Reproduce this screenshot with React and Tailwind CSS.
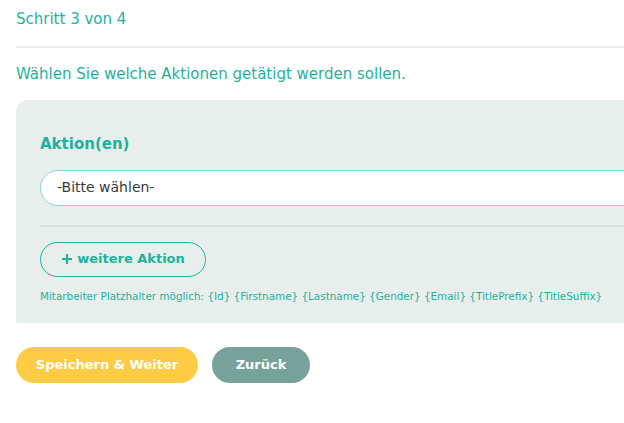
export default function App() {
  return (
    <div className="w-full min-h-[423px] overflow-hidden bg-white" style={{ fontFamily: '"DejaVu Sans", sans-serif' }}>
      <div className="w-[700px] pl-4">
        <div className="h-[38px] flex items-center text-[15px] text-[#1bb39e]">Schritt 3 von 4</div>
        <div className="h-[2px] bg-[#ececec] mt-[8px]" />
        <div className="mt-[15px] text-[15px] text-[#1bb39e]">Wählen Sie welche Aktionen getätigt werden sollen.</div>

        <div className="mt-[14px] bg-[#e7eeec] rounded-tl-[12px] px-6 pt-[34px] h-[223px]">
          <div className="text-[15px] font-bold text-[#1bb39e] leading-5">Aktion(en)</div>
          <div className="mt-[16px] h-[36px] bg-white border border-[#7fded1] rounded-l-full flex items-center pl-4 text-[14px] text-[#3a3a3a]">
            -Bitte wählen-
          </div>
          <div className="mt-[19px] h-[2px] bg-[#d9dfdd]" />
          <button className="mt-[15px] h-[35px] w-[166px] rounded-full border border-[#1bb39e] flex items-center justify-center gap-1 text-[13px] font-bold text-[#1bb39e]">
            <svg width="12" height="12" viewBox="0 0 12 12"><path d="M6 1v10M1 6h10" stroke="currentColor" strokeWidth="2.2" /></svg>
            weitere Aktion
          </button>
          <div className="mt-[12px] text-[10.4px] text-[#1bb39e]">
            Mitarbeiter Platzhalter möglich: {'{Id}'} {'{Firstname}'} {'{Lastname}'} {'{Gender}'} {'{Email}'} {'{TitlePrefix}'} {'{TitleSuffix}'}
          </div>
        </div>

        <div className="mt-[24px] flex gap-[14px]">
          <button className="h-[36px] w-[182px] rounded-full bg-[#fecb45] text-white text-[13px] font-bold">Speichern &amp; Weiter</button>
          <button className="h-[36px] w-[98px] rounded-full bg-[#76a29a] text-white text-[13px] font-bold">Zurück</button>
        </div>
      </div>
    </div>
  );
}
